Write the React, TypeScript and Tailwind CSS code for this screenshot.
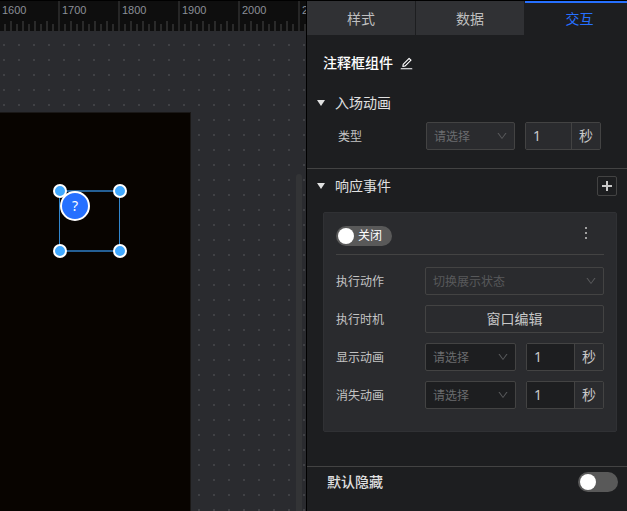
import { useState } from 'react';
import type { ReactNode } from 'react';
import { AiOutlineDown, AiOutlineEdit } from 'react-icons/ai';
import clsx from 'clsx';

const TABS = ['样式', '数据', '交互'];
const RULER_MARKS = [1600, 1700, 1800, 1900, 2000, 2100];
const TICKS = [1, 2, 3, 4, 5, 6, 7, 8, 9];

const Ruler = () => (
  <div className="h-[31px] flex overflow-hidden border-t border-black bg-[#0e0e0e]">
    <div className="flex -ml-0.5">
      {RULER_MARKS.map(mark => (
        <div key={mark} className="w-[60px] shrink-0 flex flex-col justify-between border-l-2 border-[#262626]">
          <span className="pl-0.5 pt-[2px] font-['Liberation_Sans',sans-serif] text-[11px] leading-[14px] text-[#8b8f97]">
            {mark}
          </span>
          <div className="flex items-end gap-1 pl-1">
            {TICKS.map(tick => (
              <i key={tick} className={clsx('w-0.5 bg-[#2a2a2a]', tick % 2 ? 'h-[7px]' : 'h-2.5')} />
            ))}
          </div>
        </div>
      ))}
    </div>
  </div>
);

const Handle = ({ className }: { className: string }) => (
  <span className={clsx('absolute size-3.5 rounded-full border-2 border-white bg-[#40a9ff]', className)} />
);

const Canvas = () => (
  <main className="relative flex-1 min-w-0 flex flex-col overflow-hidden border-r border-black">
    <Ruler />
    <div className="relative flex-1 flex bg-[#2a2b2f]">
      <svg className="absolute inset-0 w-full h-full" aria-hidden="true">
        <defs>
          <pattern id="dots" x="3" y="13" width="15" height="15" patternUnits="userSpaceOnUse">
            <rect width="2" height="2" fill="#404145" />
          </pattern>
        </defs>
        <rect width="100%" height="100%" fill="url(#dots)" />
      </svg>
      <div className="relative mt-[81px] w-[191px] border-t border-r border-[#1a1817] bg-[#080400]">
        {/* selected widget with its resize handles */}
        <div className="absolute left-[59px] top-[77px] w-[61px] h-[62px] border-x border-y-2 border-x-[#3286cc] border-y-[#245f94]">
          <Handle className="-left-[7px] -top-2" />
          <span className="absolute left-0 -top-px size-[30px] flex items-center justify-center rounded-full border-2 border-white bg-[#2670ff] text-sm text-white">
            ?
          </span>
          <Handle className="-right-2 -top-2" />
          <Handle className="-left-[7px] -bottom-2" />
          <Handle className="-right-2 -bottom-2" />
        </div>
      </div>
    </div>
    <div className="absolute right-1 top-[174px] bottom-0 w-1.5 rounded-t-full bg-[#333436]" />
  </main>
);

interface SwitchProps {
  label: string;
  text?: string;
}

const Switch = ({ label, text }: SwitchProps) => (
  <label className="inline-flex items-center h-5 min-w-10 rounded-full px-0.5 bg-[#595959] cursor-pointer has-checked:bg-[#2670ff]">
    <input
      type="checkbox"
      role="switch"
      aria-label={label}
      className="appearance-none size-4 rounded-full bg-white cursor-pointer"
    />
    {text && <span className="pl-1 pr-2 text-xs text-white">{text}</span>}
  </label>
);

interface SelectProps {
  id: string;
  placeholder: string;
  disabled?: boolean;
  className?: string;
}

const Select = ({ id, placeholder, disabled = false, className }: SelectProps) => (
  <div className={clsx('relative h-7 rounded-xs border border-[#434343]', className)}>
    <select
      id={id}
      disabled={disabled}
      className={clsx(
        'appearance-none w-full h-full pl-[7px] pr-6 text-xs outline-none',
        disabled ? 'text-[#58595b] opacity-100' : 'text-[#6b6c6e]'
      )}
    >
      <option>{placeholder}</option>
    </select>
    <AiOutlineDown size={12} className="absolute right-1.5 top-[7px] text-[#58595b] pointer-events-none" />
  </div>
);

interface SecondsProps {
  label: string;
  className: string;
  inputClassName: string;
}

const Seconds = ({ label, className, inputClassName }: SecondsProps) => (
  <div className={clsx('flex h-7 rounded-xs border border-[#434343] text-sm text-[#c8c8c8]', className)}>
    <input
      type="text"
      defaultValue="1"
      aria-label={label}
      className={clsx('min-w-0 flex-1 pl-[7px] border-r border-[#434343] outline-none', inputClassName)}
    />
    <span className="w-7 flex items-center justify-center bg-[#2a2b2e]">秒</span>
  </div>
);

const SectionTitle = ({ children }: { children: ReactNode }) => (
  <h3 className="flex items-center gap-2.5 text-sm text-[#e0e0e0]">
    <svg width="8" height="6" viewBox="0 0 8 6" aria-hidden="true">
      <path d="M0 0h8L4 6z" fill="currentColor" />
    </svg>
    {children}
  </h3>
);

const Row = ({ id, label, children }: { id: string; label: string; children: ReactNode }) => (
  <div className="flex items-center">
    <label htmlFor={id} className="w-[89px] shrink-0 pt-0.5 text-xs text-[#c4c4c4]">{label}</label>
    <div className="flex-1 min-w-0 flex gap-2.5">{children}</div>
  </div>
);

const App = () => {
  const [activeTab, setActiveTab] = useState('交互');

  return (
    <div className="min-h-screen flex bg-[#1d1e20] font-['Noto_Sans','Noto_Sans_CJK_SC',sans-serif]">
      <Canvas />

      <aside className="w-80 shrink-0 flex flex-col border-t border-black">
        <nav className="grid grid-cols-[109px_109px_109px] h-[34px] overflow-hidden">
          {TABS.map(tab => (
            <button
              key={tab}
              type="button"
              onClick={() => setActiveTab(tab)}
              className={clsx(
                'text-sm cursor-pointer',
                tab === activeTab
                  ? 'border-t-2 border-[#2670ff] text-[#2670ff]'
                  : 'border-r border-[#1d1e20] bg-[#303134] pt-0.5 text-[#bfbfbf]'
              )}
            >
              {tab}
            </button>
          ))}
        </nav>

        <div className="flex items-center gap-1.5 pl-4 pt-[18px] text-sm text-white">
          <h2 className="font-medium">注释框组件</h2>
          <button type="button" aria-label="编辑名称" className="cursor-pointer">
            <AiOutlineEdit size={15} />
          </button>
        </div>

        <section className="pl-2.5 pt-5 pb-[18px] border-b border-[#434343]">
          <SectionTitle>入场动画</SectionTitle>
          <div className="flex items-center pt-[9px] pl-[21px]">
            <label htmlFor="enter-type" className="w-[88px] pt-0.5 text-xs text-[#c4c4c4]">类型</label>
            <div className="flex gap-2.5">
              <Select id="enter-type" placeholder="请选择" className="w-[89px] bg-[#2a2b2e]" />
              <Seconds label="入场时长" className="w-[76px]" inputClassName="bg-[#2a2b2e]" />
            </div>
          </div>
        </section>

        <section className="pl-2.5 pr-2.5 pt-[7px] pb-[34px] border-b border-[#434343]">
          <div className="flex items-start justify-between">
            <SectionTitle>响应事件</SectionTitle>
            <button
              type="button"
              aria-label="添加事件"
              className="size-5 flex items-center justify-center rounded-xs border border-[#434343] text-[#c8c8c8] cursor-pointer"
            >
              <svg width="10" height="10" viewBox="0 0 10 10" aria-hidden="true">
                <path d="M4 0h2v4h4v2H6v4H4V6H0V4h4z" fill="currentColor" />
              </svg>
            </button>
          </div>

          <div className="mt-4 ml-1.5 px-3 pt-[13px] pb-[22px] rounded-xs border border-[#303134] bg-[#2a2b2e]">
            <div className="flex items-center justify-between pb-2 border-b border-[#434343]">
              <Switch label="启用事件" text="关闭" />
              <button type="button" aria-label="更多" className="px-[17px] pb-1.5 text-[#a0a0a0] cursor-pointer">
                <svg width="2" height="12" viewBox="0 0 2 12" aria-hidden="true">
                  <path d="M0 0h2v2H0zM0 5h2v2H0zM0 10h2v2H0z" fill="currentColor" />
                </svg>
              </button>
            </div>

            <div className="flex flex-col gap-2.5 pt-3">
              <Row id="action" label="执行动作">
                <Select id="action" placeholder="切换展示状态" disabled className="flex-1" />
              </Row>
              <Row id="timing" label="执行时机">
                <button
                  id="timing"
                  type="button"
                  className="flex-1 h-7 rounded-xs border border-[#434343] text-sm text-[#c8c8c8] cursor-pointer"
                >
                  窗口编辑
                </button>
              </Row>
              <Row id="show" label="显示动画">
                <Select id="show" placeholder="请选择" className="flex-1 bg-[#1d1e20]" />
                <Seconds label="显示时长" className="w-[78px]" inputClassName="bg-[#1d1e20]" />
              </Row>
              <Row id="hide" label="消失动画">
                <Select id="hide" placeholder="请选择" className="flex-1 bg-[#1d1e20]" />
                <Seconds label="消失时长" className="w-[78px]" inputClassName="bg-[#1d1e20]" />
              </Row>
            </div>
          </div>
        </section>

        <div className="flex items-center justify-between pl-5 pr-[9px] pt-[5px]">
          <h3 className="text-sm font-medium text-[#e0e0e0]">默认隐藏</h3>
          <Switch label="默认隐藏" />
        </div>
      </aside>
    </div>
  );
};

export default App;
